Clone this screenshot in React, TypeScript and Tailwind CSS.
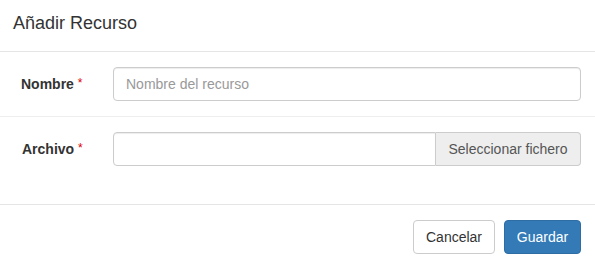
const App = () => {
  return (
    <div className="w-[595px] h-[268px] bg-white text-[#333] font-['Liberation_Sans',Arial,sans-serif] text-[14px]">
      <div className="h-[52px] border-b border-[#e5e5e5] flex items-center px-[13px]">
        <h4 className="text-[18px] leading-none text-[#333] -mt-[6px]">Añadir Recurso</h4>
      </div>

      <div className="h-[153px] border-b border-[#e5e5e5]">
        <div className="flex items-center h-[65px] border-b border-[#eee] pr-[14px]">
          <label className="w-[113px] pl-[21px] font-bold">
            Nombre <span className="text-[#d00] font-normal text-[12px] align-top">*</span>
          </label>
          <input
            type="text"
            placeholder="Nombre del recurso"
            className="flex-1 h-[34px] px-[12px] border border-[#ccc] rounded-[4px] shadow-[inset_0_1px_1px_rgba(0,0,0,0.075)] placeholder:text-[#999] outline-none"
          />
        </div>
        <div className="flex items-center h-[64px] pr-[14px]">
          <label className="w-[113px] pl-[22px] font-bold">
            Archivo <span className="text-[#d00] font-normal text-[12px] align-top">*</span>
          </label>
          <div className="flex-1 flex h-[34px]">
            <div className="flex-1 border border-[#ccc] rounded-l-[4px] shadow-[inset_0_1px_1px_rgba(0,0,0,0.075)]" />
            <div className="w-[145px] flex items-center justify-center bg-[#eee] border border-l-0 border-[#ccc] rounded-r-[4px] text-[#555]">
              Seleccionar fichero
            </div>
          </div>
        </div>
      </div>

      <div className="flex justify-end items-center gap-[9px] pt-[15px] pr-[14px]">
        <button className="h-[34px] w-[82px] border border-[#ccc] rounded-[4px] bg-white text-[#333]">
          Cancelar
        </button>
        <button className="h-[34px] w-[77px] border border-[#2e6da4] rounded-[4px] bg-[#337ab7] text-white">
          Guardar
        </button>
      </div>
    </div>
  );
};

export default App;
